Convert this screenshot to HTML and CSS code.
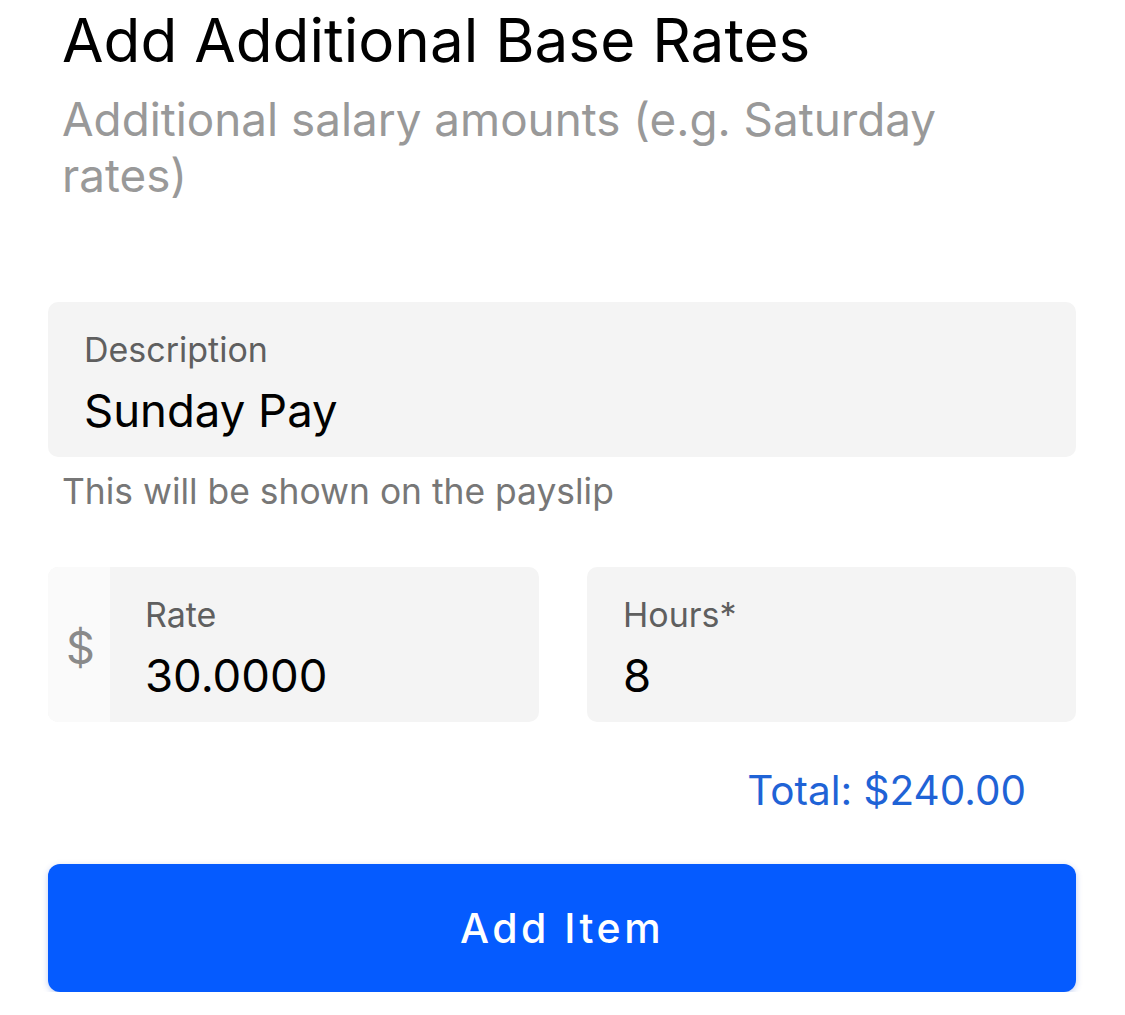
FILE: index.html
```html
<!DOCTYPE html>
<html lang="en">
<head>
    <meta charset="UTF-8">
    <meta name="viewport" content="width=device-width, initial-scale=1.0">
    <title>Add Additional Base Rates</title>
    <link rel="stylesheet" href="styles.css">
</head>
<body>
    <div class="sheet">
        <header class="sheet-header">
            <h1>Add Additional Base Rates</h1>
            <p>Additional salary amounts (e.g. Saturday rates)</p>
        </header>

        <div class="field">
            <div class="field-body">
                <span class="field-label">Description</span>
                <span class="field-value">Sunday Pay</span>
            </div>
        </div>
        <p class="hint">This will be shown on the payslip</p>

        <div class="field-row">
            <div class="field">
                <span class="field-prefix">$</span>
                <div class="field-body">
                    <span class="field-label">Rate</span>
                    <span class="field-value">30.0000</span>
                </div>
            </div>
            <div class="field">
                <div class="field-body">
                    <span class="field-label">Hours*</span>
                    <span class="field-value">8</span>
                </div>
            </div>
        </div>

        <div class="total">Total: $240.00</div>

        <button class="btn">Add Item</button>
    </div>
</body>
</html>
```

FILE: styles.css
```css
/* Global Styles */
body {
    font-family: 'Inter', 'Roboto', sans-serif;
    background: #ffffff;
    color: #000000;
    margin: 0;
    padding: 0;
}

.sheet {
    width: 1028px;
    padding: 0 49px 0 48px;
}

/* Header */
.sheet-header {
    padding: 8px 14px 0;
    margin-bottom: 98px;
}

.sheet-header h1 {
    font-size: 60.2px;
    font-weight: 400;
    line-height: 66px;
    margin: 0;
}

.sheet-header p {
    font-size: 45.8px;
    line-height: 56px;
    color: #999999;
    margin: 18px 0 0;
    width: 900px;
}

/* Fields */
.field {
    display: flex;
    height: 155px;
    background: #f4f4f4;
    border-radius: 10px;
    overflow: hidden;
}

.field-prefix {
    width: 62px;
    flex-shrink: 0;
    background: #fafafa;
    color: #8a8a8a;
    font-size: 45px;
    padding: 6px 0 0 18px;
    box-sizing: border-box;
    display: flex;
    align-items: center;
}

.field-body {
    display: flex;
    flex-direction: column;
    padding: 28px 36px 0;
}

.field-prefix + .field-body {
    padding-left: 35px;
}

.field-label {
    font-size: 34px;
    line-height: 40px;
    color: #5f5f5f;
}

.field-value {
    font-size: 45.5px;
    line-height: 56px;
    margin-top: 13px;
}

.hint {
    font-size: 35.4px;
    line-height: 42px;
    color: #777777;
    margin: 14px 0 0 14px;
}

.field-row {
    display: grid;
    grid-template-columns: 491px 489px;
    gap: 48px;
    margin-top: 54px;
}

/* Total */
.total {
    text-align: right;
    font-size: 40.5px;
    line-height: 50px;
    color: #1f63d6;
    padding-right: 50px;
    margin-top: 44px;
}

/* Button */
.btn {
    display: block;
    width: 100%;
    height: 128px;
    margin-top: 48px;
    background: #055bff;
    color: #ffffff;
    border: none;
    border-radius: 12px;
    font-family: inherit;
    font-size: 41px;
    font-weight: 500;
    letter-spacing: 3.5px;
    box-shadow: 0 2px 6px rgba(5, 60, 200, 0.25);
}
```
